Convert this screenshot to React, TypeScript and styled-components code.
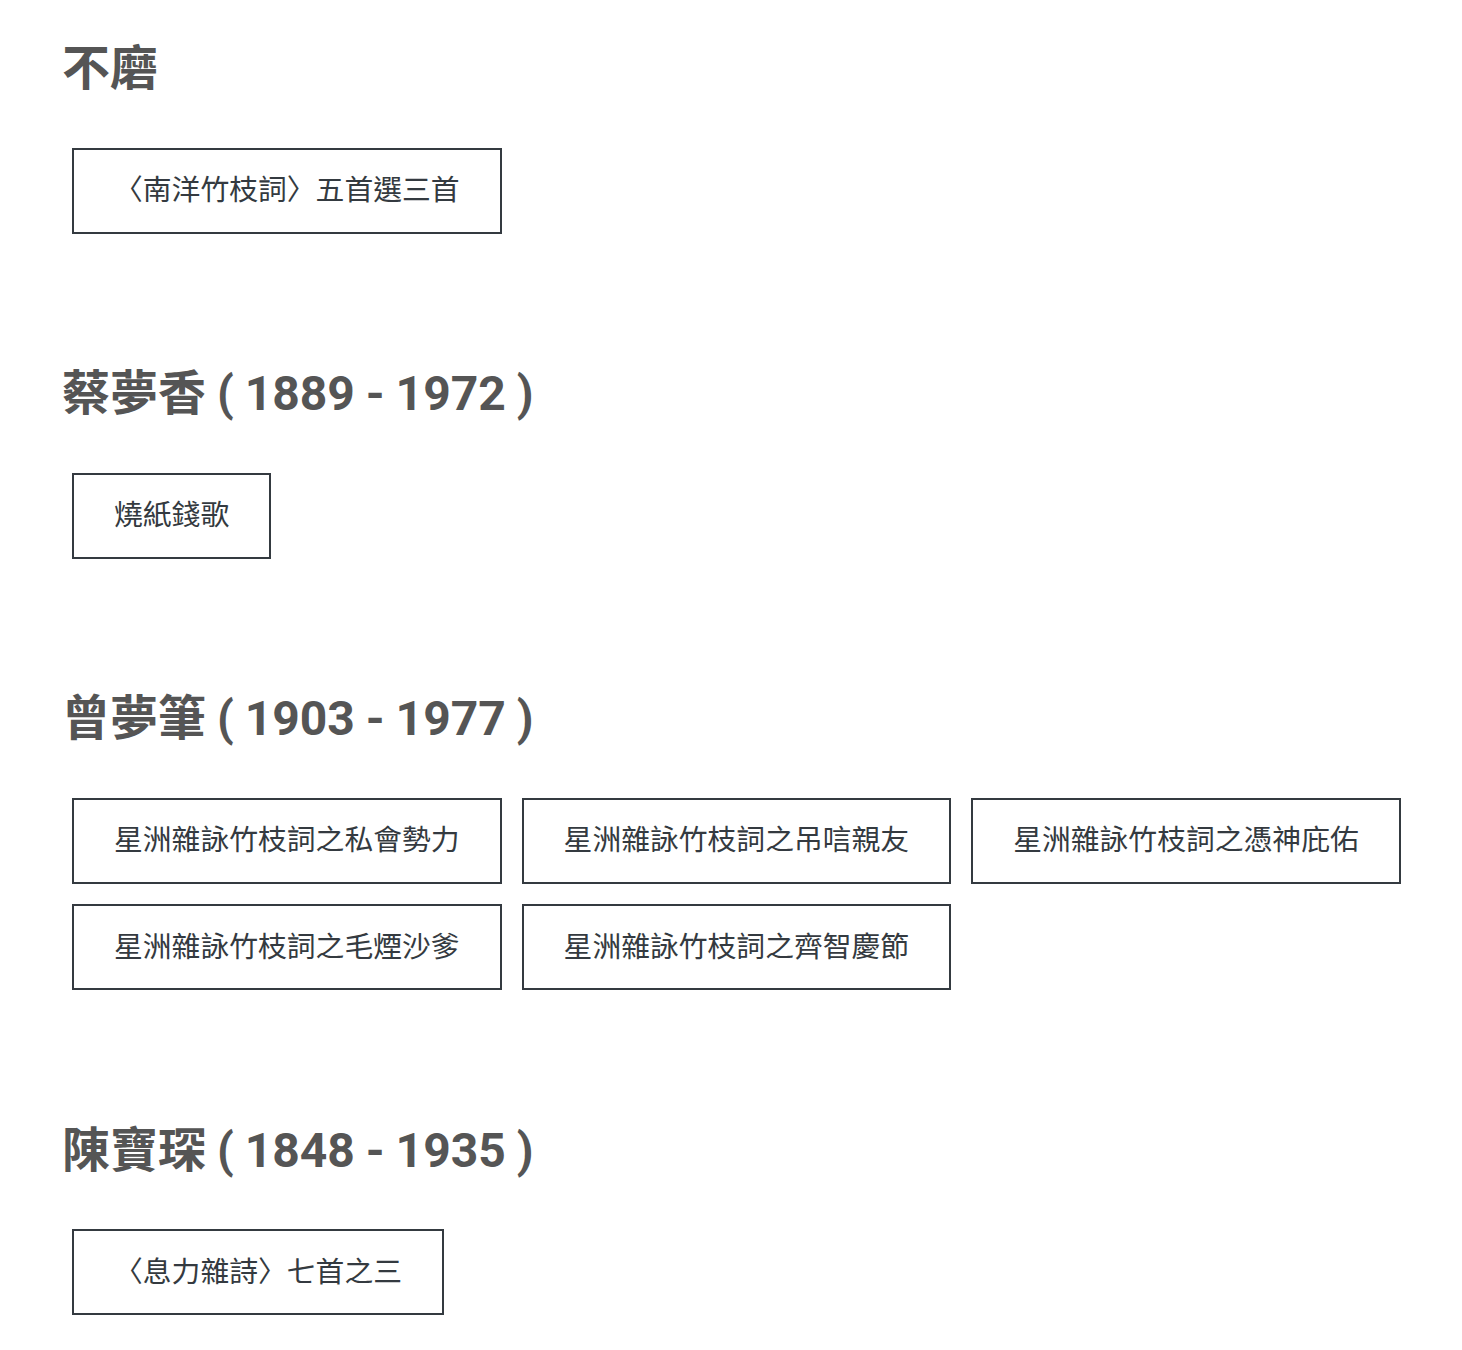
import React from "react";
import styled, { createGlobalStyle } from "styled-components";

const GlobalStyle = createGlobalStyle`
  html, body {
    margin: 0;
    padding: 0;
    background: #ffffff;
  }
  body {
    font-family: Roboto, "Noto Sans CJK TC", "Noto Sans CJK SC", sans-serif;
  }
`;

const Page = styled.main`
  display: flex;
  flex-direction: column;
  gap: 131.5px;
  padding: 40px 62px 35px;
`;

const Section = styled.section`
  display: flex;
  flex-direction: column;
  gap: 50px;
`;

const AuthorHeading = styled.h2`
  margin: 0;
  font-size: 48px;
  line-height: 1.2;
  font-weight: 700;
  color: #555555;
  word-spacing: -1px;
`;

const PoemList = styled.div`
  display: flex;
  flex-wrap: wrap;
  gap: 20.5px 20px;
  padding-left: 10px;
  width: 1340px;
`;

const PoemButton = styled.a`
  display: inline-block;
  box-sizing: border-box;
  padding: 19.4px 40px;
  border: 2px solid #343a40;
  color: #343a40;
  font-size: 28.8px;
  line-height: 1.5;
  font-weight: 400;
  text-decoration: none;
  white-space: nowrap;
  cursor: pointer;
`;

type Author = { name: string; years?: string; poems: string[] };

const authors: Author[] = [
  { name: "不磨", poems: ["〈南洋竹枝詞〉五首選三首"] },
  { name: "蔡夢香", years: "1889 - 1972", poems: ["燒紙錢歌"] },
  {
    name: "曾夢筆",
    years: "1903 - 1977",
    poems: [
      "星洲雜詠竹枝詞之私會勢力",
      "星洲雜詠竹枝詞之吊唁親友",
      "星洲雜詠竹枝詞之憑神庇佑",
      "星洲雜詠竹枝詞之毛煙沙爹",
      "星洲雜詠竹枝詞之齊智慶節",
    ],
  },
  { name: "陳寶琛", years: "1848 - 1935", poems: ["〈息力雜詩〉七首之三"] },
];

export default function App() {
  return (
    <>
      <GlobalStyle />
      <Page>
        {authors.map((a) => (
          <Section key={a.name}>
            <AuthorHeading>
              {a.name}
              {a.years ? ` ( ${a.years} )` : ""}
            </AuthorHeading>
            <PoemList>
              {a.poems.map((p) => (
                <PoemButton key={p}>{p}</PoemButton>
              ))}
            </PoemList>
          </Section>
        ))}
      </Page>
    </>
  );
}
